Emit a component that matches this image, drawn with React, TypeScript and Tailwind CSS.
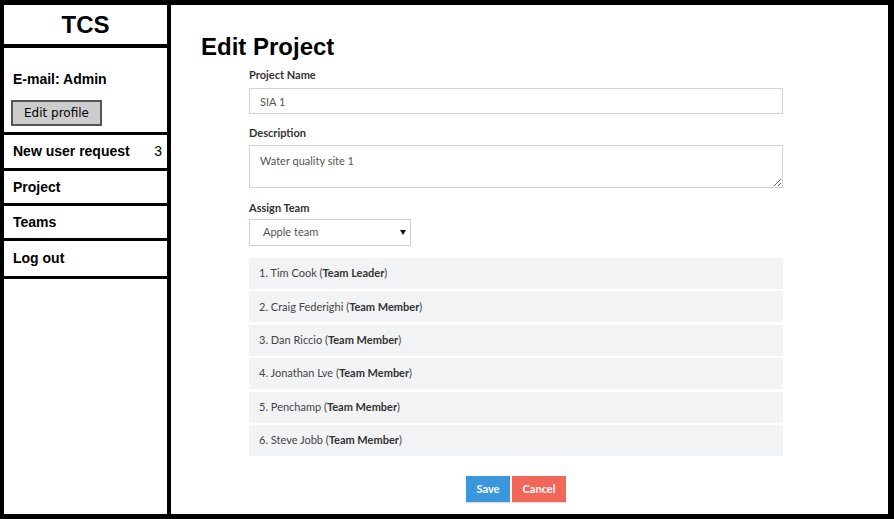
const members = [
  { name: 'Tim Cook', role: 'Team Leader' },
  { name: 'Craig Federighi', role: 'Team Member' },
  { name: 'Dan Riccio', role: 'Team Member' },
  { name: 'Jonathan Lve', role: 'Team Member' },
  { name: 'Penchamp', role: 'Team Member' },
  { name: 'Steve Jobb', role: 'Team Member' },
]

const Sidebar: React.FC = () => {
  return (
    <aside className="flex w-[167px] shrink-0 flex-col border-r-4 border-black font-['Liberation_Sans',Arial,sans-serif] text-black">
      <div className="flex h-[43px] items-center justify-center border-b-4 border-black text-[24px] font-bold">
        TCS
      </div>
      <div className="flex h-[87px] flex-col border-b-[3px] border-black px-[7px] pt-[22px]">
        <p className="pl-[2px] text-[14px] font-bold leading-[18px]">E-mail: Admin</p>
        <button className="mt-[12px] h-[26px] w-[91px] border-2 border-[#555] bg-[#cccccc] font-['DejaVu_Sans',sans-serif] text-[12px] text-black">
          Edit profile
        </button>
      </div>
      <div className="flex h-[36px] items-center justify-between border-b-[3px] border-black pl-[9px] pr-[5px] text-[14px] font-bold">
        <span>New user request</span>
        <span className="font-normal">3</span>
      </div>
      <div className="flex h-[35px] items-center border-b-[3px] border-black pl-[9px] text-[14px] font-bold">
        Project
      </div>
      <div className="flex h-[35px] items-center border-b-[3px] border-black pl-[9px] text-[14px] font-bold">
        Teams
      </div>
      <div className="flex h-[38px] items-center border-b-[3px] border-black pl-[9px] text-[14px] font-bold">
        Log out
      </div>
    </aside>
  )
}

const App: React.FC = () => {
  return (
    <div className="h-[519px] w-[894px] overflow-hidden bg-white">
      <div className="flex h-full w-full border-b-[5px] border-l-4 border-r-[6px] border-t-[5px] border-black">
        <Sidebar />
        <main className="flex-1 pl-[30px] pt-[28px]">
          <h1 className="font-['Liberation_Sans',Arial,sans-serif] text-[24px] font-bold leading-[28px] text-black">
            Edit Project
          </h1>
          <div className="ml-[48px] w-[534px] font-['Lato','Open_Sans',sans-serif] text-[11px]">
            <label className="block pt-[7px] font-bold leading-[14px] text-[#333]">Project Name</label>
            <input
              readOnly
              value="SIA 1"
              className="mt-[6px] block h-[26px] w-full border border-[#d2d2d2] bg-white px-[10px] text-[11px] text-[#555] outline-none"
            />
            <label className="block pt-[12px] font-bold leading-[14px] text-[#333]">Description</label>
            <textarea
              readOnly
              defaultValue="Water quality site 1"
              className="mt-[5px] block h-[43px] w-full border border-[#d2d2d2] bg-white px-[10px] py-[7px] text-[11px] text-[#555] outline-none"
            />
            <label className="block pt-[13px] font-bold leading-[14px] text-[#333]">Assign Team</label>
            <div className="mt-[4px] flex h-[27px] w-[162px] items-center justify-between border border-[#d2d2d2] bg-white pl-[13px] pr-[4px] text-[#555]">
              <span>Apple team</span>
              <svg width="6" height="5" viewBox="0 0 6 5">
                <path d="M0 0H6L3 5Z" fill="#111" />
              </svg>
            </div>
            <ul className="mt-[12px] flex flex-col gap-[2.4px]">
              {members.map((m, i) => (
                <li key={m.name} className="flex h-[31px] items-center bg-[#f2f3f5] pl-[10px] text-[#444]">
                  {i + 1}. {m.name} (<b className="text-[#333]">{m.role}</b>)
                </li>
              ))}
            </ul>
            <div className="mt-[20px] flex justify-center gap-[2px]">
              <button className="h-[26px] w-[44px] bg-[#3a97dd] text-[11px] font-bold text-white shadow-[0_1px_1px_rgba(0,0,0,0.15)]">
                Save
              </button>
              <button className="h-[26px] w-[54px] bg-[#f1675a] text-[11px] font-bold text-white shadow-[0_1px_1px_rgba(0,0,0,0.15)]">
                Cancel
              </button>
            </div>
          </div>
        </main>
      </div>
    </div>
  )
}

export default App
